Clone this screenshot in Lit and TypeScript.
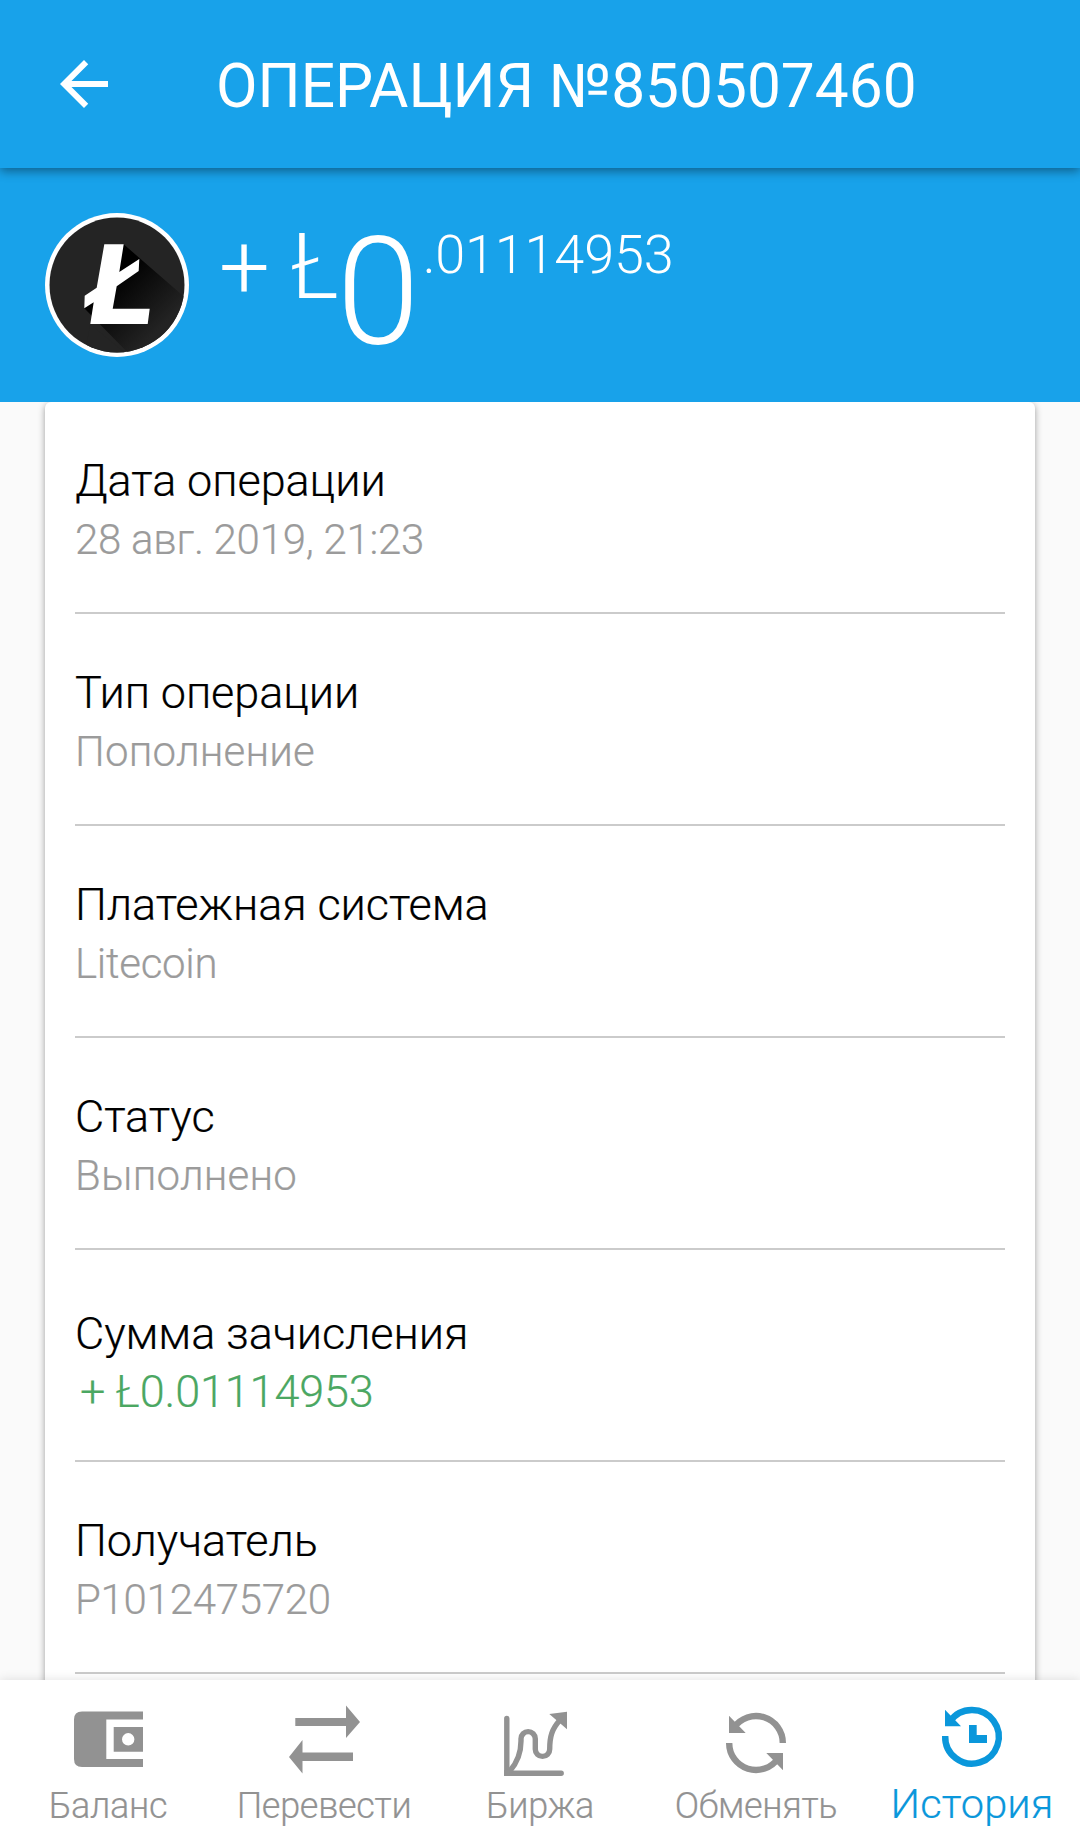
import { LitElement, html, css, svg, TemplateResult } from "lit";
import { customElement, property } from "lit/decorators.js";

interface Detail {
  label: string;
  value: string;
  tone?: string;
}

const DETAILS: Detail[] = [
  { label: "Дата операции", value: "28 авг. 2019, 21:23", tone: "numeric" },
  { label: "Тип операции", value: "Пополнение" },
  { label: "Платежная система", value: "Litecoin", tone: "numeric" },
  { label: "Статус", value: "Выполнено" },
  { label: "Сумма зачисления", value: "+ Ł0.01114953", tone: "income" },
  { label: "Получатель", value: "P1012475720", tone: "numeric" },
];

const ICONS: Record<string, TemplateResult> = {
  wallet: svg`<path fill="currentColor" fill-rule="evenodd" d="M19 11.5H80V19.5H43.3V59H80V67H19Q11 67 11 59V19.5Q11 11.5 19 11.5Z M50.7 27H80V51.7H50.7Z M65.2 33.1A6.2 6.2 0 1 0 65.2 45.5A6.2 6.2 0 1 0 65.2 33.1Z"/>`,
  transfer: svg`<path fill="currentColor" d="M16.3 18H67V5.5L81 22L67 38V26H16.3Z M74 52.5H23.5V40L10 57L23.5 73.5V61H74Z"/>`,
  chart: svg`<g fill="none" stroke="currentColor" stroke-width="5.4" stroke-linecap="round">
      <path d="M11.8 18.4V73.2H66.2"/>
      <path stroke-linecap="butt" d="M14.5 71.5C22 63 26 53 26 41V38.8A7.1 7.1 0 0 1 40.3 38.8V49.2A7.2 7.2 0 0 0 54.7 49.2C54.7 36 57 29 65 20"/>
    </g><path fill="currentColor" d="M9.1 70V76H15V70Z M54.3 14L72 11.7V29.3Z"/>`,
  exchange: svg`<g fill="none" stroke="currentColor" stroke-width="6.4">
      <path d="M71.8 43A26.8 26.8 0 0 0 23 27.5"/><path d="M18.2 43A26.8 26.8 0 0 0 67 58.5"/>
    </g><path fill="currentColor" d="M18 15.7V33H34.7Z M72 70.3V53H55.3Z"/>`,
  history: svg`<path fill="none" stroke="currentColor" stroke-width="6.4" d="M18.2 36A26.8 26.8 0 1 0 23 21.5"/>
    <path fill="currentColor" d="M18 9.7V26.3H34Z M42 25H49.7V35H60V43H42Z"/>`,
};

@customElement("nav-tab")
class NavTab extends LitElement {
  @property() icon = "";
  @property() label = "";
  @property({ type: Boolean, reflect: true }) active = false;

  static styles = css`
    :host {
      display: flex;
      flex-direction: column;
      align-items: center;
      padding-top: 20px;
      color: #929292;
      font-size: 36px;
      letter-spacing: -0.3px;
    }
    :host([active]) {
      color: #0a97db;
      font-size: 41.5px;
      letter-spacing: 0.15px;
    }
    .icon {
      display: block;
      width: 90px;
      height: 80px;
    }
    .label {
      line-height: 52px;
      white-space: nowrap;
      -webkit-text-stroke: 0.2px currentColor;
    }
    :host([active]) .label {
      line-height: 48px;
    }
  `;

  render() {
    return html`<svg class="icon" viewBox="0 0 90 80">${ICONS[this.icon]}</svg>
      <span class="label">${this.label}</span>`;
  }
}

@customElement("app-root")
class AppRoot extends LitElement {
  static styles = css`
    :host {
      display: flex;
      flex-direction: column;
      height: 1848px;
      overflow: hidden;
      background: #fafafa;
      font-family: Roboto, "Open Sans", sans-serif;
      font-weight: 300;
    }
    .bar {
      display: flex;
      align-items: center;
      flex: none;
      height: 168px;
      background: #18a2ea;
      color: #fff;
      z-index: 1;
      box-shadow: 0 3px 10px rgba(0, 0, 0, 0.42);
      box-sizing: border-box;
      padding-left: 48px;
    }
    .back {
      width: 72px;
      height: 72px;
      fill: #fff;
    }
    .title {
      margin: 0 0 0 96px;
      padding-top: 6px;
      font-size: 60.4px;
      font-weight: 400;
      line-height: 162px;
      white-space: nowrap;
    }
    .hero {
      display: flex;
      align-items: flex-start;
      flex: none;
      height: 234px;
      background: #18a2ea;
      color: #fff;
      box-sizing: border-box;
      padding-left: 45px;
    }
    .coin {
      width: 144px;
      height: 144px;
      margin-top: 45px;
    }
    .sign,
    .whole,
    .fraction {
      white-space: pre;
    }
    .sign {
      margin: 55px 0 0 30px;
      font-size: 90px;
      line-height: 90px;
      letter-spacing: -0.3px;
    }
    .whole {
      margin: 50px 0 0 -2px;
      font-size: 150px;
      line-height: 150px;
    }
    .fraction {
      margin: 60px 0 0 3px;
      font-size: 54px;
      line-height: 54px;
      letter-spacing: -0.2px;
    }
    .content {
      flex: 1;
      min-height: 0;
      overflow: hidden;
      padding: 0 45px;
    }
    .card {
      height: 1400px;
      padding: 0 30px;
      background: #fff;
      border-radius: 6px;
      box-shadow: 0 2px 7px rgba(0, 0, 0, 0.38);
    }
    .row {
      height: 212px;
      box-sizing: border-box;
      padding-top: 52px;
      border-bottom: 2px solid #cbcbcb;
    }
    .row.income {
      padding-top: 57px;
    }
    .label {
      font-size: 45px;
      line-height: 54px;
      letter-spacing: -0.08px;
      color: #000;
      -webkit-text-stroke: 0.2px currentColor;
    }
    .value {
      font-size: 42px;
      line-height: 63px;
      letter-spacing: 0.2px;
      color: #9b9b9b;
      -webkit-text-stroke: 0.2px currentColor;
    }
    .numeric .value {
      letter-spacing: -0.28px;
    }
    .income .value {
      padding-left: 5px;
      font-size: 45px;
      line-height: 61px;
      letter-spacing: -0.15px;
      color: #4ba762;
    }
    .nav {
      display: grid;
      grid-template-columns: repeat(5, 1fr);
      flex: none;
      height: 168px;
      background: #fff;
      box-shadow: 0 0 10px rgba(0, 0, 0, 0.12);
      z-index: 1;
    }
  `;

  private renderCoin() {
    return html`<svg class="coin" viewBox="0 0 144 144">
      <defs>
        <linearGradient id="shade" gradientUnits="userSpaceOnUse" x1="70" y1="65" x2="118" y2="112">
          <stop offset="0" stop-color="#000" />
          <stop offset="1" stop-color="#232323" />
        </linearGradient>
        <clipPath id="disc"><circle cx="72" cy="72" r="67.5" /></clipPath>
      </defs>
      <circle cx="72" cy="72" r="72" fill="#fff" />
      <circle cx="72" cy="72" r="67.5" fill="#242424" />
      <path clip-path="url(#disc)" fill="url(#shade)" d="M78.7 31.3L144 88V144H87L39.3 95.3L51 78Z" />
      <path clip-path="url(#disc)" fill="#242424" d="M45.3 111L80 140H40Z" />
      <path
        fill="#fff"
        d="M59.3 31.3H78.7L74.3 59L94.3 46L93.7 58L71.7 73.3L67.7 95.7H104.7L102.7 111H45.3L48.7 89.3L39.3 95.3L39.7 82.7L51.7 74.7Z"
      />
    </svg>`;
  }

  render() {
    return html`
      <header class="bar">
        <svg class="back" viewBox="0 0 24 24">
          <path d="M20 11H7.83l5.59-5.59L12 4l-8 8 8 8 1.41-1.41L7.83 13H20z" />
        </svg>
        <h1 class="title">ОПЕРАЦИЯ №850507460</h1>
      </header>
      <section class="hero">
        ${this.renderCoin()}
        <span class="sign">+ Ł</span><span class="whole">0</span><span class="fraction">.01114953</span>
      </section>
      <main class="content">
        <div class="card">
          ${DETAILS.map(
            (d) => html`<div class="row ${d.tone ?? ""}">
              <div class="label">${d.label}</div>
              <div class="value">${d.value}</div>
            </div>`
          )}
        </div>
      </main>
      <nav class="nav">
        <nav-tab icon="wallet" label="Баланс"></nav-tab>
        <nav-tab icon="transfer" label="Перевести"></nav-tab>
        <nav-tab icon="chart" label="Биржа"></nav-tab>
        <nav-tab icon="exchange" label="Обменять"></nav-tab>
        <nav-tab icon="history" label="История" active></nav-tab>
      </nav>
    `;
  }
}
